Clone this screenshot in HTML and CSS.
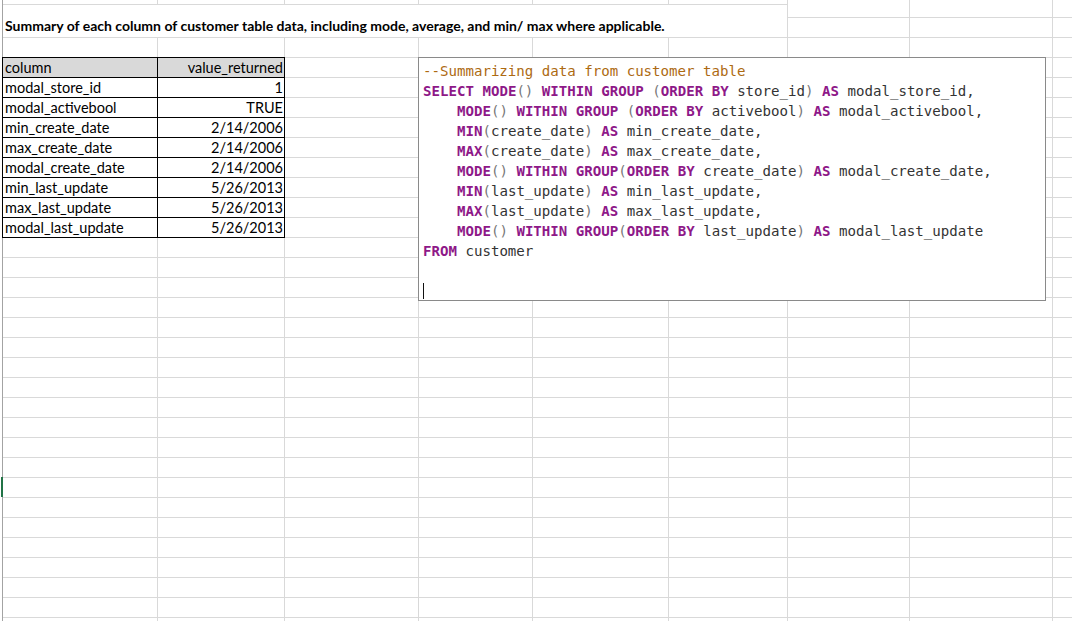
FILE: index.html
```html
<!DOCTYPE html>
<html>
<head>
<meta charset="utf-8">
<link rel="stylesheet" href="styles.css">
</head>
<body>
<div class="sheet">
  <div class="col"></div>
  <div class="col"></div>
  <div class="col"></div>
  <div class="col"></div>
  <div class="col"></div>
  <div class="col"></div>
  <div class="col"></div>
  <div class="col"></div>
  <div class="col"></div>
  <div class="title">Summary of each column of customer table data, including mode, average, and min/ max where applicable.</div>
  <div class="tbl">
    <div class="cell hd">column</div><div class="cell hd num">value_returned</div>
    <div class="cell">modal_store_id</div><div class="cell num">1</div>
    <div class="cell">modal_activebool</div><div class="cell num">TRUE</div>
    <div class="cell">min_create_date</div><div class="cell num">2/14/2006</div>
    <div class="cell">max_create_date</div><div class="cell num">2/14/2006</div>
    <div class="cell">modal_create_date</div><div class="cell num">2/14/2006</div>
    <div class="cell">min_last_update</div><div class="cell num">5/26/2013</div>
    <div class="cell">max_last_update</div><div class="cell num">5/26/2013</div>
    <div class="cell">modal_last_update</div><div class="cell num">5/26/2013</div>
  </div>
</div>
<div class="active-row"></div>
<div class="codebox"><pre class="code"><span class="cm">--Summarizing data from customer table</span>
<span class="kw">SELECT</span> <span class="kw">MODE</span><span class="op">()</span> <span class="kw">WITHIN</span> <span class="kw">GROUP</span> <span class="op">(</span><span class="kw">ORDER</span> <span class="kw">BY</span> store_id<span class="op">)</span> <span class="kw">AS</span> modal_store_id,
    <span class="kw">MODE</span><span class="op">()</span> <span class="kw">WITHIN</span> <span class="kw">GROUP</span> <span class="op">(</span><span class="kw">ORDER</span> <span class="kw">BY</span> activebool<span class="op">)</span> <span class="kw">AS</span> modal_activebool,
    <span class="kw">MIN</span><span class="op">(</span>create_date<span class="op">)</span> <span class="kw">AS</span> min_create_date,
    <span class="kw">MAX</span><span class="op">(</span>create_date<span class="op">)</span> <span class="kw">AS</span> max_create_date,
    <span class="kw">MODE</span><span class="op">()</span> <span class="kw">WITHIN</span> <span class="kw">GROUP</span><span class="op">(</span><span class="kw">ORDER</span> <span class="kw">BY</span> create_date<span class="op">)</span> <span class="kw">AS</span> modal_create_date,
    <span class="kw">MIN</span><span class="op">(</span>last_update<span class="op">)</span> <span class="kw">AS</span> min_last_update,
    <span class="kw">MAX</span><span class="op">(</span>last_update<span class="op">)</span> <span class="kw">AS</span> max_last_update,
    <span class="kw">MODE</span><span class="op">()</span> <span class="kw">WITHIN</span> <span class="kw">GROUP</span><span class="op">(</span><span class="kw">ORDER</span> <span class="kw">BY</span> last_update<span class="op">)</span> <span class="kw">AS</span> modal_last_update
<span class="kw">FROM</span> customer

<span class="caret"></span></pre></div>
</body>
</html>
```
FILE: styles.css
```css
html, body {
  margin: 0;
  padding: 0;
  background: #ffffff;
  width: 1072px;
  height: 621px;
  overflow: hidden;
}

.sheet {
  margin-top: -2px;
  margin-left: 2px;
  border-left: 1px solid #a3a3a3;
  display: grid;
  grid-template-columns: 155px 127px 134px 114px 136px 119px 122px 143px 1fr;
  grid-template-rows: repeat(32, 20px);
  background-image: repeating-linear-gradient(to bottom, transparent 0, transparent 19px, #d9d9d9 19px, #d9d9d9 20px);
}

.col {
  grid-row: 1 / -1;
  border-right: 1px solid #d9d9d9;
}

.col:nth-child(1) { grid-column: 1; }
.col:nth-child(2) { grid-column: 2; }
.col:nth-child(3) { grid-column: 3; }
.col:nth-child(4) { grid-column: 4; }
.col:nth-child(5) { grid-column: 5; }
.col:nth-child(6) { grid-column: 6; }
.col:nth-child(7) { grid-column: 7; }
.col:nth-child(8) { grid-column: 8; }
.col:nth-child(9) { grid-column: 9; border-right: none; }

.title {
  grid-row: 2;
  grid-column: 1 / 7;
  align-self: start;
  margin-top: -14px;
  margin-right: 1px;
  height: 33px;
  box-sizing: border-box;
  border-top: 1px solid #d9d9d9;
  background: #ffffff;
  padding: 11px 0 0 2px;
  font-family: Lato, "Open Sans", sans-serif;
  font-weight: 700;
  font-size: 14px;
  line-height: 20px;
  color: #000000;
  white-space: nowrap;
}

.tbl {
  grid-row: 4 / 13;
  grid-column: 1 / 3;
  align-self: start;
  justify-self: start;
  margin: -1px 0 0 -1px;
  display: grid;
  grid-template-columns: 155px 127px;
  grid-auto-rows: 20px;
  border-top: 1px solid #000000;
  border-left: 1px solid #000000;
  background: #ffffff;
  font-family: Lato, "Open Sans", sans-serif;
  font-size: 14.5px;
  color: #000000;
}

.cell {
  box-sizing: border-box;
  border-right: 1px solid #000000;
  border-bottom: 1px solid #000000;
  padding: 0 2px;
  line-height: 19px;
  white-space: nowrap;
  overflow: hidden;
}

.cell.hd {
  background: #d9d9d9;
}

.cell.num {
  text-align: right;
  padding-right: 1px;
}

.active-row {
  position: absolute;
  left: 1px;
  top: 477px;
  width: 2px;
  height: 20px;
  background: #217346;
}

.codebox {
  position: absolute;
  left: 418px;
  top: 57px;
  width: 628px;
  height: 244px;
  box-sizing: border-box;
  border: 1px solid #8a8a8a;
  background: #ffffff;
  padding: 3px 0 0 4px;
  overflow: hidden;
}

.code {
  margin: 0;
  font-family: "DejaVu Sans Mono", "Liberation Mono", monospace;
  font-size: 14.1px;
  line-height: 20px;
  color: #333333;
}

.kw {
  color: #8e1888;
  font-weight: 700;
}

.cm {
  color: #ad6a12;
}

.op {
  color: #777777;
}

.caret {
  display: inline-block;
  width: 1px;
  height: 16px;
  background: #111111;
  vertical-align: -3px;
}
```
